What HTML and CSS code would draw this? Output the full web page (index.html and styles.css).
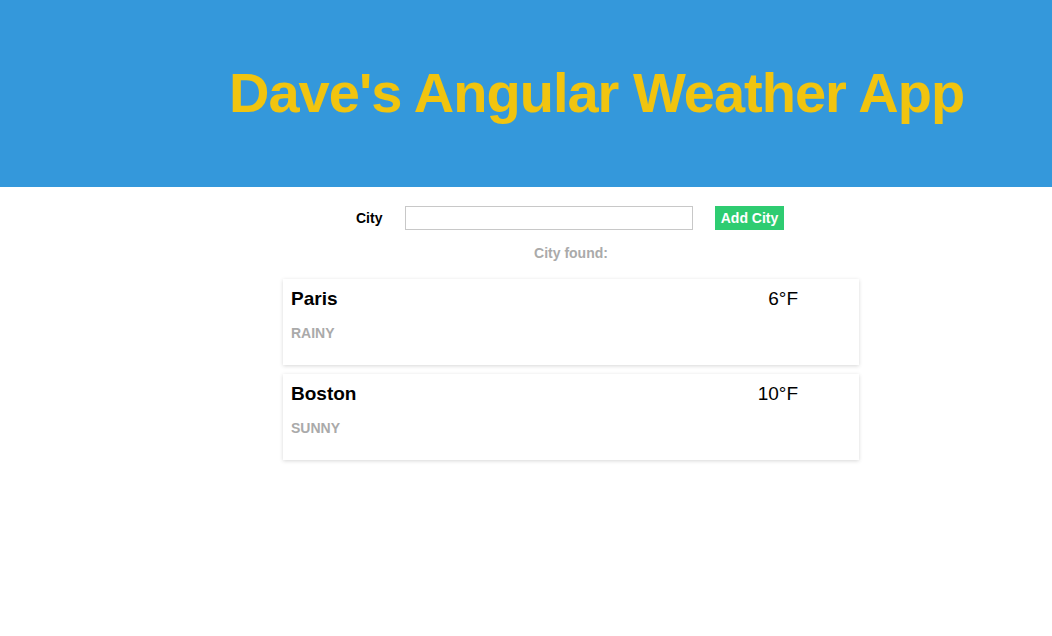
FILE: index.html
```html
<!DOCTYPE html>
<html>
<head>
<meta charset="utf-8">
<link rel="stylesheet" href="styles.css">
</head>
<body>
<header class="banner">
  <h1 class="title">Dave's Angular Weather App</h1>
</header>
<main class="content">
  <form class="add-form">
    <label class="city-label" for="city">City</label>
    <input class="city-input" id="city" type="text">
    <button class="add-btn" type="button">Add City</button>
  </form>
  <p class="found">City found:</p>
  <div class="cards">
    <div class="card">
      <div class="card-top">
        <span class="card-name">Paris</span>
        <span class="card-temp">6°F</span>
      </div>
      <div class="card-cond">RAINY</div>
    </div>
    <div class="card">
      <div class="card-top">
        <span class="card-name">Boston</span>
        <span class="card-temp">10°F</span>
      </div>
      <div class="card-cond">SUNNY</div>
    </div>
  </div>
</main>
</body>
</html>
```
FILE: styles.css
```css
* { box-sizing: border-box; }
body {
  margin: 0;
  font-family: "Liberation Sans", Arial, sans-serif;
  background: #fff;
  color: #000;
}
.banner {
  background: #3498db;
  height: 187px;
  display: flex;
  align-items: center;
  padding-left: 229px;
}
.title {
  margin: 0;
  color: #f1c40f;
  font-size: 56px;
  letter-spacing: -1px;
  font-weight: bold;
  line-height: 1;
  padding-bottom: 2px;
}
.content {
  width: 576px;
  margin-left: 283px;
  padding-bottom: 8px;
}
.add-form {
  display: flex;
  align-items: center;
  margin-top: 18px;
  padding-left: 73px;
  height: 25px;
}
.city-label {
  font-weight: bold;
  font-size: 14px;
  width: 49px;
}
.city-input {
  width: 288px;
  height: 24px;
  border: 1px solid #c8c8c8;
  margin: 0;
  padding: 2px 4px;
}
.add-btn {
  margin-left: 22px;
  background: #2ecc71;
  color: #fff;
  border: 0;
  font-family: "Liberation Sans", Arial, sans-serif;
  font-weight: bold;
  font-size: 14px;
  height: 24px;
  width: 69px;
  padding: 0;
}
.found {
  margin: 15px 0 0;
  text-align: center;
  color: #aaa;
  font-weight: bold;
  font-size: 14px;
  line-height: 16px;
}
.cards {
  margin-top: 18px;
  display: flex;
  flex-direction: column;
  gap: 9px;
}
.card {
  height: 86px;
  background: #fff;
  box-shadow: 0 1px 4px rgba(0,0,0,0.16);
  padding: 9px 61px 0 8px;
}
.card-top {
  display: flex;
  justify-content: space-between;
  align-items: baseline;
  font-size: 19px;
  line-height: 22px;
}
.card-name { font-weight: bold; }
.card-cond {
  margin-top: 15px;
  color: #aaa;
  font-weight: bold;
  font-size: 14px;
}
```
